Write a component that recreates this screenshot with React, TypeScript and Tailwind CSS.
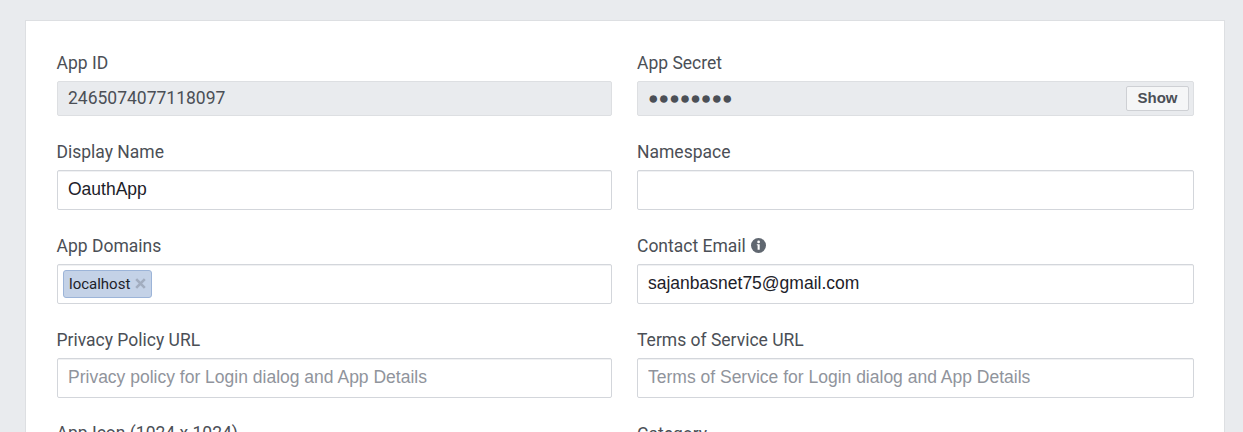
import type { ReactNode } from "react";

function Field({ label, nudge = "", children }: { label: ReactNode; nudge?: string; children?: ReactNode }) {
  return (
    <div className="flex flex-col gap-1.5">
      <div className={`flex h-6 items-center whitespace-nowrap text-[17.5px] leading-6 text-[#4b4f56] ${nudge}`}>{label}</div>
      {children}
    </div>
  );
}

function TextInput({ value, placeholder }: { value?: string; placeholder?: string }) {
  return (
    <input
      className="h-10 w-full rounded-xs border border-[#d3d6db] bg-white px-2.5 pb-px font-['Liberation_Sans',Arial,sans-serif] text-[17.5px] text-[#1d2129] shadow-[inset_0_1px_0_#f0f1f3] outline-none placeholder:text-[#90949c]"
      defaultValue={value}
      placeholder={placeholder}
    />
  );
}

function InfoIcon() {
  return (
    <svg className="mb-px ml-[5px] size-[15px]" viewBox="0 0 15 15" aria-hidden="true">
      <circle cx="7.5" cy="7.5" r="7.5" fill="#606770" />
      <circle cx="7.6" cy="3.9" r="1.35" fill="#fff" />
      <path d="M5.8 6.2h2.9v5.6H6.6V7.3h-.8z" fill="#fff" />
    </svg>
  );
}

function DomainToken({ name }: { name: string }) {
  return (
    <span className="flex h-7 items-center rounded-[3px] border border-[#9cb4d8] bg-[#c4d2e7] pr-[5px] pl-[5px] text-[15px] text-[#1d2129]">
      {name}
      <svg className="mb-px ml-[5px] size-[11px]" viewBox="0 0 11 11" aria-hidden="true">
        <path d="M1.2 1.2l8.6 8.6M9.8 1.2l-8.6 8.6" stroke="#a2adbf" strokeWidth="2.6" />
      </svg>
    </span>
  );
}

export default function App() {
  return (
    <div className="h-[432px] overflow-hidden bg-[#e9ebee] pt-5 pr-[18px] pl-[25px] font-[Roboto,sans-serif]">
      <main className="grid h-[500px] grid-cols-[555px_557px] content-start gap-x-[25px] gap-y-6 border border-[#dddfe2] bg-white pt-[30px] pl-[31px]">
        <Field label="App ID" nudge="-ml-[0.5px]">
          <div className="flex h-[35px] items-center rounded-xs border border-[#dddfe2] bg-[#e9ebee] px-2.5 pb-px text-[17.5px] text-[#4b4f56]">
            2465074077118097
          </div>
        </Field>
        <Field label="App Secret">
          <div className="flex h-[35px] items-center justify-between rounded-xs border border-[#dddfe2] bg-[#e9ebee] pr-1 pl-2.5 text-[17.5px] text-[#4b4f56]">
            <span>●●●●●●●●</span>
            <button className="h-[25px] w-[63px] rounded-xs border border-[#ced0d4] bg-[#f5f6f7] pb-[3px] font-['Liberation_Sans',Arial,sans-serif] text-[15px] font-bold leading-none text-[#4b4f56]">
              Show
            </button>
          </div>
        </Field>

        <Field label="Display Name" nudge="-ml-[0.5px]">
          <TextInput value="OauthApp" />
        </Field>
        <Field label="Namespace">
          <TextInput />
        </Field>

        <Field label="App Domains" nudge="-ml-[0.5px]">
          <div className="flex h-10 items-center rounded-xs border border-[#d3d6db] bg-white pl-[5px] shadow-[inset_0_1px_0_#f0f1f3]">
            <DomainToken name="localhost" />
          </div>
        </Field>
        <Field
          label={
            <>
              Contact Email
              <InfoIcon />
            </>
          }
        >
          <TextInput value="sajanbasnet75@gmail.com" />
        </Field>

        <Field label="Privacy Policy URL" nudge="-ml-[0.5px]">
          <TextInput placeholder="Privacy policy for Login dialog and App Details" />
        </Field>
        <Field label="Terms of Service URL">
          <TextInput placeholder="Terms of Service for Login dialog and App Details" />
        </Field>

        <Field label="App Icon (1024 x 1024)" nudge="-mt-px -ml-[0.5px]" />
        <Field label="Category" />
      </main>
    </div>
  );
}
